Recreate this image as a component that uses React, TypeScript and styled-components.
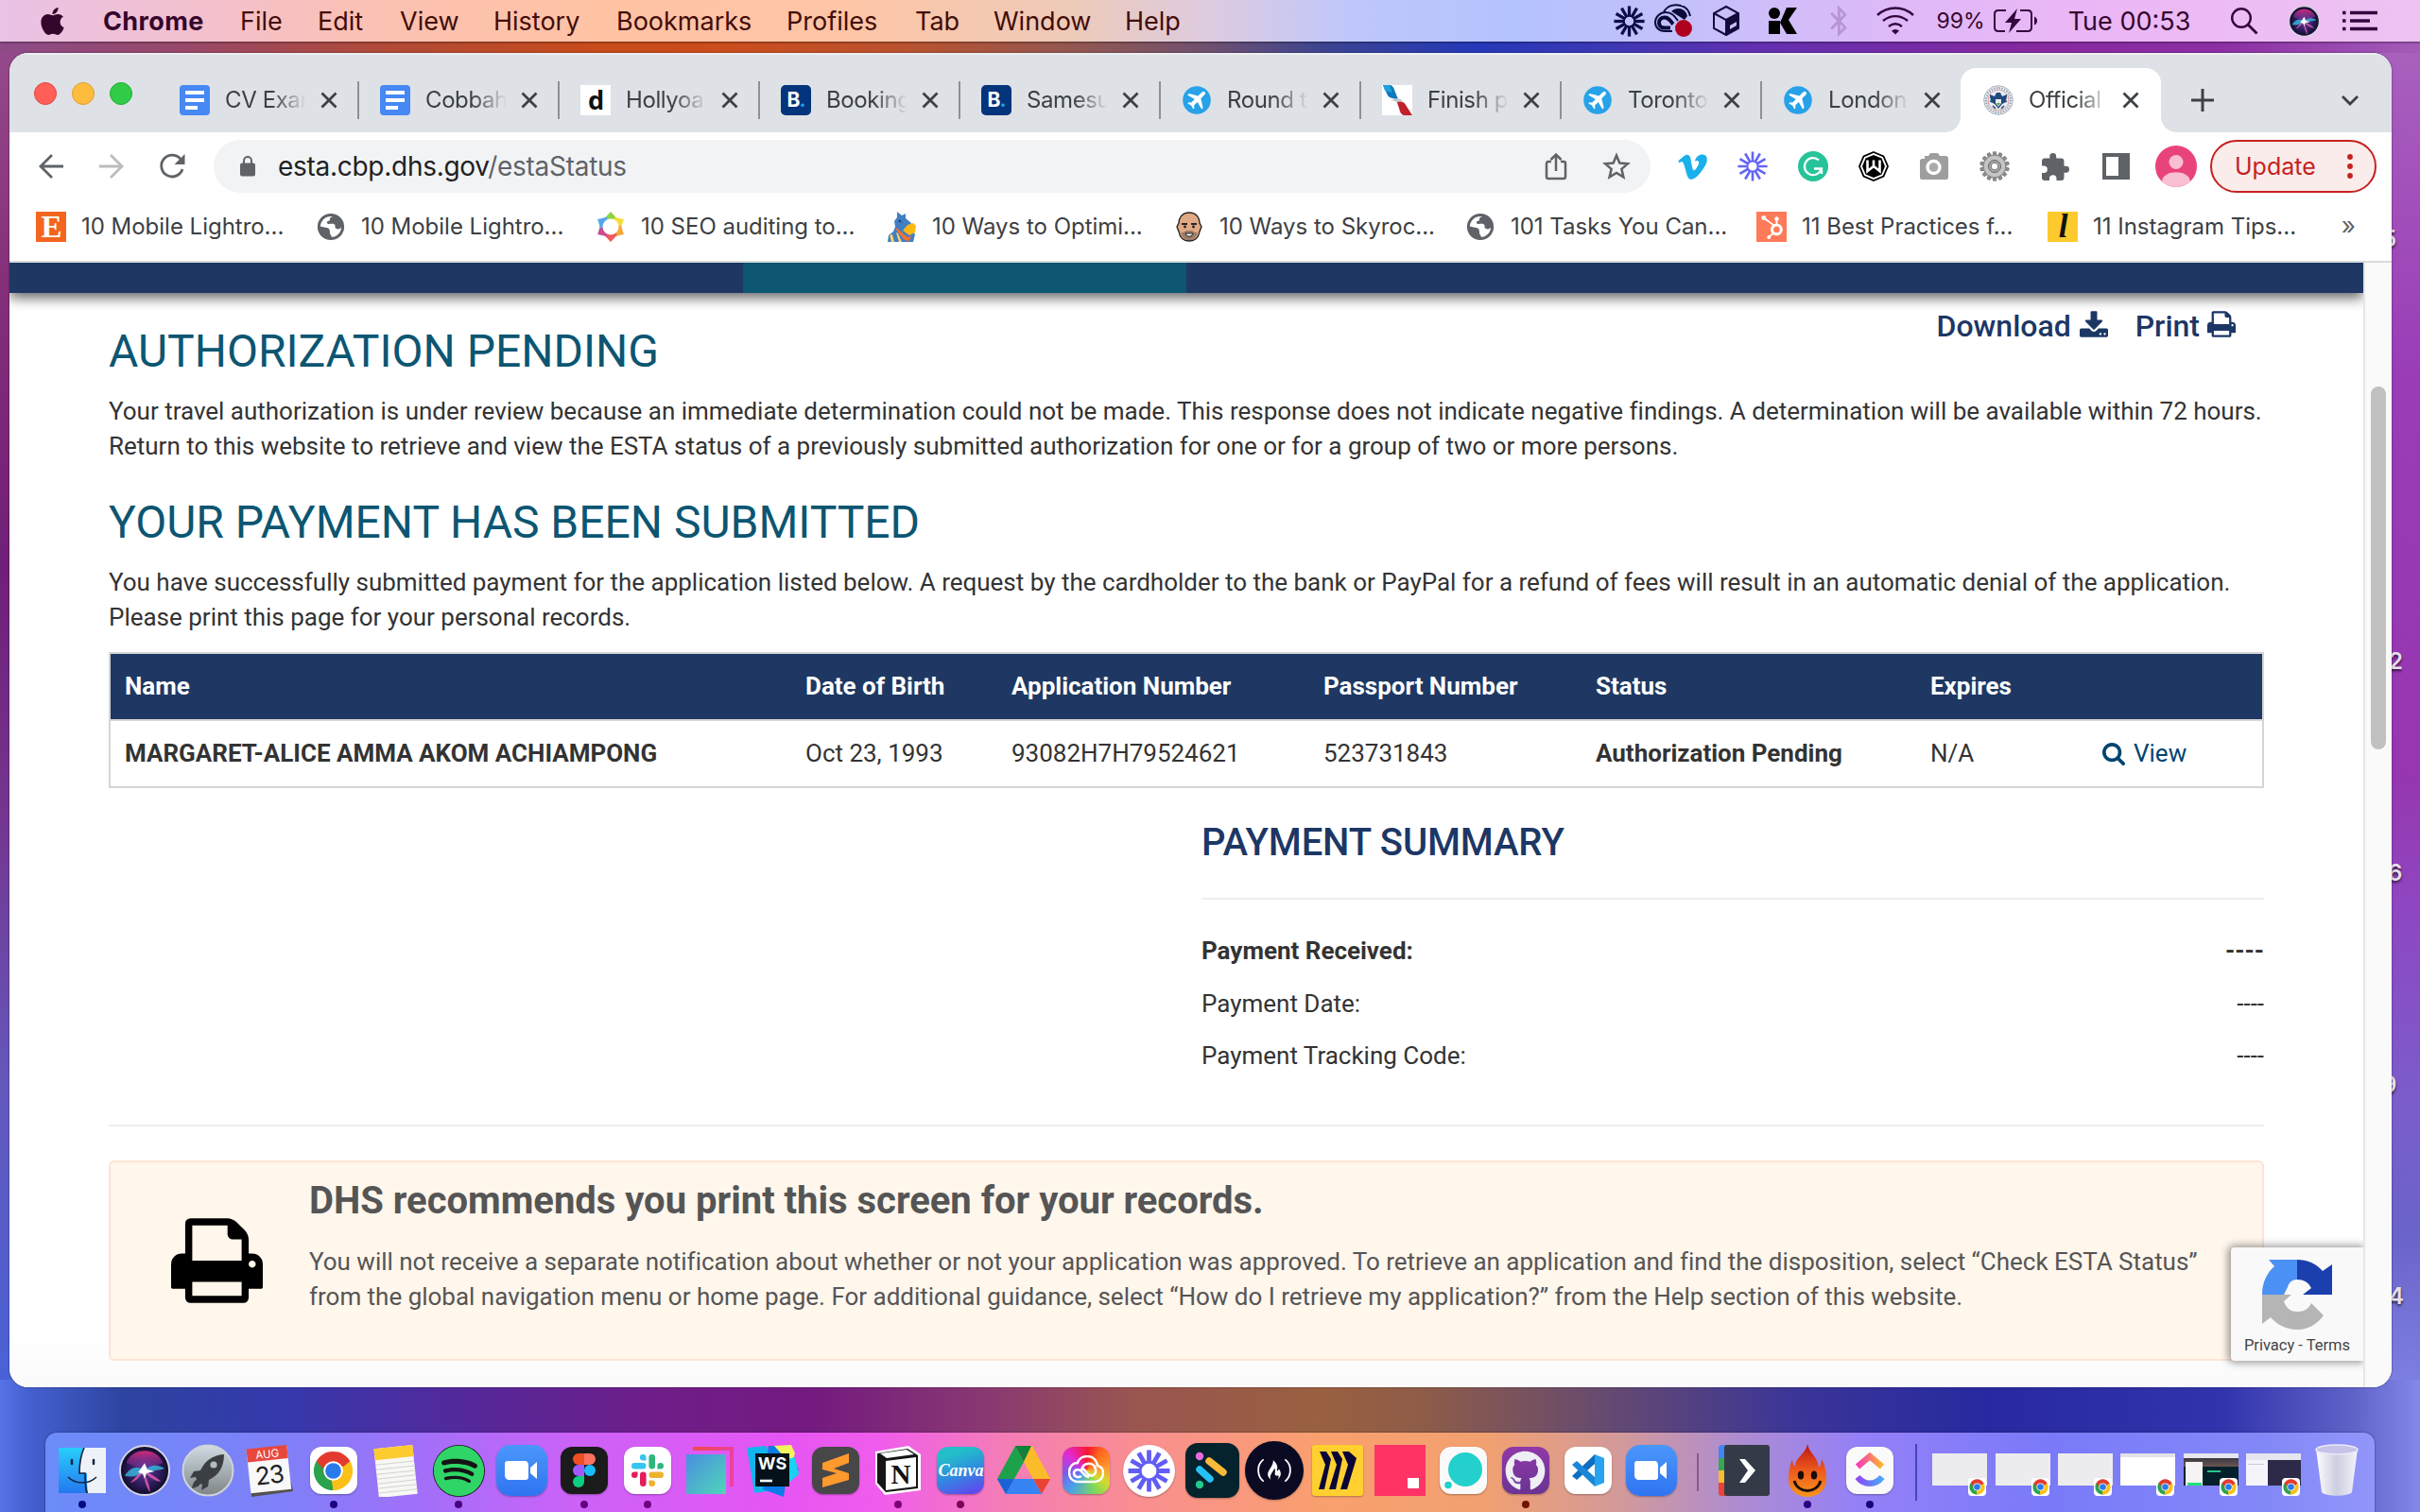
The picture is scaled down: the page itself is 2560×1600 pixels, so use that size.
import React, { ReactNode } from 'react';
import styled, { createGlobalStyle, css } from 'styled-components';
import { FaApple, FaBluetoothB, FaVimeoV, FaSpotify, FaGithub, FaHubspot, FaFreeCodeCamp } from 'react-icons/fa';

const ui = `Inter, "Noto Sans", sans-serif`;
const web = `Roboto, "Noto Sans", sans-serif`;

const GlobalStyle = createGlobalStyle`
  *, *::before, *::after { box-sizing: border-box; }
  body { margin: 0; overflow: hidden; }
  svg { display: block; flex: none; }
  h1, h2, h3, p { margin: 0; }
`;

/* ---------- desktop ---------- */

const Desktop = styled.div`
  position: relative;
  display: flex;
  flex-direction: column;
  width: 2560px;
  height: 1600px;
  overflow: hidden;
  font-family: ${ui};
  background:
    linear-gradient(90deg, #8d4b87 0, #984868 200px, #b04a38 400px, #c84b1a 640px, #cb4c1c 760px, #b9522f 960px, #8f5754 1150px, #6f5070 1280px, #3c4490 1400px, #2538b8 1560px, #3c38b4 1700px, #6030b0 1850px, #86299f 2150px, #8c2fa5 2350px, #a35bb8 2560px) 0 0 / 2560px 56px no-repeat,
    linear-gradient(90deg, #5573e6 0, #4560d0 30px, #2d44a0 130px, #3538ac 300px, #55289a 500px, #701d88 700px, #741a80 860px, #8a3a70 1050px, #9a5550 1200px, #996040 1400px, #8f5c48 1500px, #654a70 1700px, #3a3598 1900px, #2829a0 2100px, #3133ac 2350px, #6062c8 2490px, #8488e8 2560px) 0 1460px / 2560px 140px no-repeat,
    linear-gradient(180deg, #94498a 56px, #852f7a 300px, #701f78 600px, #74358f 860px, #6458bc 1150px, #4a62d6 1460px) 0 0 / 1280px 1460px no-repeat,
    linear-gradient(180deg, #a860bd 56px, #9a3cb8 400px, #9636b0 820px, #8f46c0 950px, #7a5ecb 1180px, #6a63c8 1300px, #7c7ee0 1460px) 1280px 0 / 1280px 1460px no-repeat;
`;

const IconLabel = styled.span<{ $x: number; $y: number }>`
  position: absolute;
  left: ${(p) => p.$x}px;
  top: ${(p) => p.$y}px;
  font-size: 24px;
  line-height: 30px;
  font-weight: 600;
  color: #e6dfea;
  text-shadow: 0 2px 3px rgba(0, 0, 0, 0.7);
`;

const MenuBar = styled.header`
  display: flex;
  align-items: center;
  justify-content: space-between;
  flex: none;
  height: 44px;
  padding: 0 45px 0 40px;
  font-size: 27px;
  color: #35062c;
  box-shadow: 0 1px 2px rgba(0, 0, 0, 0.45);
  background: linear-gradient(90deg, #e9c2e6 0, #f3c0cf 200px, #fbc1b2 400px, #ffc3a4 640px, #fdc5a6 900px, #eecab8 1130px, #ddcbe0 1280px, #bfc7fb 1430px, #b4c2fd 1600px, #c6c0fa 1800px, #deb9f8 2000px, #ebb6f6 2200px, #eec3f1 2560px);
`;

const MenuList = styled.nav`
  display: grid;
  grid-template-columns: 69px 145px 82px 87px 99px 130px 180px 136px 83px 139px auto;
  align-items: center;
  line-height: 45px;
`;
const MenuItem = styled.span<{ $bold?: boolean; $warm?: boolean }>`
  font-weight: ${(p) => (p.$bold ? 700 : 400)};
  letter-spacing: ${(p) => (p.$bold ? 0.4 : 0)}px;
  color: ${(p) => (p.$warm ? '#430c08' : '#35062c')};
`;
const AppleSlot = styled.div`
  margin-left: -1px;
`;
const StatusList = styled.div`
  display: flex;
  align-items: center;
  height: 44px;
`;
const StatusItem = styled.div<{ $w: number; $gap?: number; $size?: number }>`
  display: flex;
  align-items: center;
  justify-content: center;
  width: ${(p) => p.$w}px;
  margin-left: ${(p) => p.$gap ?? 0}px;
  white-space: nowrap;
  ${(p) => p.$size && css`font-size: ${p.$size}px;`}
`;

/* ---------- browser window ---------- */

const Window = styled.section`
  position: relative;
  display: flex;
  flex-direction: column;
  flex: none;
  width: 2520px;
  height: 1412px;
  margin: 12px 0 0 10px;
  border-radius: 20px;
  background: #fff;
  overflow: hidden;
  box-shadow: 0 0 2px rgba(0, 0, 0, 0.6);
`;
const TabStrip = styled.div`
  display: flex;
  align-items: center;
  flex: none;
  height: 84px;
  padding: 16px 0 0 26px;
  background: #dee1e6;
  box-shadow: inset 0 2px 0 #eceef1;
`;
const TrafficLights = styled.div`
  display: flex;
  gap: 16px;
  width: 132px;
  padding-bottom: 14px;
`;
const Light = styled.i<{ $fill: string; $ring: string }>`
  width: 24px;
  height: 24px;
  border-radius: 50%;
  background: ${(p) => p.$fill};
  border: 1px solid ${(p) => p.$ring};
`;
const TabTitle = styled.span`
  width: 85px;
  margin-left: 16px;
  overflow: hidden;
  white-space: nowrap;
  line-height: 32px;
  mask-image: linear-gradient(90deg, #000 50px, transparent 86px);
`;
const TabClose = styled.div`
  width: 18px;
  margin-left: 16px;
`;
const Tab = styled.div<{ $active?: boolean }>`
  position: relative;
  display: flex;
  align-items: center;
  width: 212px;
  height: 68px;
  padding-left: 22px;
  font-size: 24px;
  letter-spacing: -0.4px;
  color: #3c4043;
  ${(p) => p.$active && css`
    background: #fff;
    border-radius: 16px 16px 0 0;
    margin-left: -2px;
    padding-left: 24px;
    margin-right: 2px;
    ${TabClose} { margin-left: 14px; }
    &::before, &::after {
      content: '';
      position: absolute;
      bottom: 0;
      width: 16px;
      height: 16px;
    }
    &::before { left: -16px; background: radial-gradient(circle at 0 0, transparent 15.5px, #fff 16px); }
    &::after { right: -16px; background: radial-gradient(circle at 100% 0, transparent 15.5px, #fff 16px); }
  `}
`;
const TabDivider = styled.i`
  width: 2px;
  height: 40px;
  margin-left: 21px;
  background: #8d9095;
`;
const TabActions = styled.div`
  display: flex;
  flex: 1;
  align-items: center;
  justify-content: space-between;
  padding: 0 34px 0 29px;
`;
const Tile = styled.div<{ $bg: string; $fg?: string; $radius?: number; $font?: string; $size?: number }>`
  display: flex;
  align-items: center;
  justify-content: center;
  flex: none;
  width: 32px;
  height: 32px;
  border-radius: ${(p) => p.$radius ?? 0}px;
  background: ${(p) => p.$bg};
  color: ${(p) => p.$fg ?? '#fff'};
  font: 700 ${(p) => p.$size ?? 24}px/32px ${(p) => p.$font ?? ui};
  letter-spacing: -1px;
`;
const Dot = styled.span`color: #1ba4e8;`;

const Toolbar = styled.div`
  display: flex;
  align-items: center;
  flex: none;
  height: 72px;
  padding: 0 16px 0 12px;
`;
const ToolSlot = styled.div`
  display: flex;
  flex: none;
  align-items: center;
  justify-content: center;
  width: 64px;
  height: 56px;
`;
const Omnibox = styled.div`
  display: flex;
  flex: none;
  align-items: center;
  width: 1520px;
  height: 56px;
  margin: 0 12px;
  padding: 0 4px 0 28px;
  border-radius: 28px;
  background: #f1f3f4;
`;
const Url = styled.span`
  flex: 1;
  margin-left: 24px;
  font-size: 28px;
  letter-spacing: -0.28px;
  color: #202124;
`;
const UrlPath = styled.span`color: #5f6368;`;
const UpdateButton = styled.div`
  display: flex;
  flex: none;
  align-items: center;
  justify-content: space-between;
  width: 176px;
  height: 56px;
  margin-left: 4px;
  padding: 0 23px 0 24px;
  border: 2px solid #c5221f;
  border-radius: 28px;
  background: #f9eceb;
  color: #c5221f;
  font-size: 25px;
`;
const BookmarksBar = styled.div`
  display: grid;
  grid-template-columns: 296px 296px 308px 304px 308px 308px 308px auto auto;
  align-items: center;
  flex: none;
  height: 66px;
  padding: 0 38px 8px 28px;
  border-bottom: 2px solid #d8dadd;
`;
const Bookmark = styled.div`
  display: flex;
  align-items: center;
  gap: 16px;
  font-size: 24px;
  line-height: 30px;
  letter-spacing: -0.02px;
  color: #3c4043;
  white-space: nowrap;
`;
const More = styled.span`
  justify-self: end;
  margin-top: -4px;
  font-size: 26px;
  color: #5f6368;
`;

/* ---------- web page ---------- */

const Viewport = styled.div`
  position: relative;
  display: flex;
  flex: 1;
  min-height: 0;
  overflow: hidden;
`;
const Page = styled.main`
  width: 2490px;
  font-family: ${web};
  font-size: 26px;
  line-height: 37px;
  letter-spacing: -0.01px;
  color: #333;
  overflow: hidden;
  background: linear-gradient(180deg, #fff 1130px, #fafafa 1190px);
`;
const SiteNav = styled.div`
  height: 32px;
  background: linear-gradient(90deg, #1e3863 776px, #0c5672 776px, #0c5672 1245px, #1e3863 1245px);
  box-shadow: 0 5px 14px rgba(0, 0, 0, 0.62);
`;
const Content = styled.div`padding: 16px 105px 0 105px;`;
const TitleRow = styled.div`
  display: flex;
  justify-content: space-between;
  height: 91px;
`;
const Title = styled.h1`
  padding-top: 19px;
  font-size: 48px;
  font-weight: 400;
  line-height: 53px;
  color: #0c5672;
`;
const SubTitle = styled(Title).attrs({ as: 'h2' })`padding: 35px 0 19px;`;
const PageActions = styled.div`
  display: flex;
  height: 37px;
  margin-right: 30px;
  gap: 29px;
`;
const Action = styled.a<{ $gap: number }>`
  display: flex;
  gap: ${(p) => p.$gap}px;
  margin-top: 1px;
  font-size: 32px;
  font-weight: 500;
  color: #1d3765;
  svg { margin-top: 2px; }
`;

const Table = styled.div`
  width: 2280px;
  margin-top: 18px;
  border: 2px solid #d5d5d5;
`;
const Row = styled.div<{ $head?: boolean }>`
  display: grid;
  grid-template-columns: 720px 218px 330px 288px 354px 182px 1fr;
  height: ${(p) => (p.$head ? 71 : 69)}px;
  padding-top: 16px;
  ${(p) => p.$head && css`
    background: #1e3863;
    color: #fff;
    font-weight: 700;
    border-bottom: 2px solid #d5d5d5;
  `}
`;
const Cell = styled.div<{ $strong?: boolean }>`
  padding-left: 15px;
  font-weight: ${(p) => (p.$strong ? 700 : 'inherit')};
  white-space: nowrap;
`;
const ViewLink = styled.a`
  display: flex;
  align-items: center;
  gap: 9px;
  height: 37px;
  padding-left: 15px;
  color: #00446f;
`;

const Summary = styled.section`
  width: 1124px;
  margin: 36px 0 0 1156px;
`;
const SummaryTitle = styled.h2`
  padding-bottom: 36px;
  border-bottom: 2px solid #eee;
  font-size: 40px;
  font-weight: 500;
  line-height: 44px;
  letter-spacing: -0.15px;
  color: #1d3765;
`;
const SummaryList = styled.div`
  display: grid;
  gap: 18.5px;
  margin-top: 36px;
`;
const SummaryLine = styled.div<{ $strong?: boolean }>`
  display: flex;
  justify-content: space-between;
  font-weight: ${(p) => (p.$strong ? 700 : 400)};
`;
const Rule = styled.div`
  height: 2px;
  margin: 54px 0 36px;
  background: #eee;
`;
const Notice = styled.section`
  display: flex;
  width: 2280px;
  height: 212px;
  padding: 19px 0 0 64px;
  border: 2px solid #fde4d4;
  border-radius: 6px;
  background: #fff6ec;
  color: #555;
  svg { margin-top: 40px; }
`;
const NoticeBody = styled.div`margin-left: 49px;`;
const NoticeTitle = styled.h3`
  margin-bottom: 24px;
  font-size: 40px;
  line-height: 44px;
`;
const Captcha = styled.div`
  position: absolute;
  left: 2350px;
  top: 1042px;
  display: flex;
  flex-direction: column;
  align-items: center;
  width: 140px;
  height: 120px;
  padding-top: 12px;
  border-radius: 4px 0 0 4px;
  background: #f9f9f9;
  box-shadow: -1px 0 8px 2px rgba(0, 0, 0, 0.4);
  clip-path: inset(-14px 0 -14px -14px);
  font: 16.5px/20px ${web};
  color: #444;
`;
const CaptchaLinks = styled.span`margin-top: 6px;`;
const Scrollbar = styled.div`
  width: 30px;
  padding: 131px 0 0 6px;
  background: #fafafa;
  border-left: 2px solid #e6e6e6;
`;
const Thumb = styled.div`
  width: 16px;
  height: 384px;
  border-radius: 8px;
  background: #c1c1c1;
`;

/* ---------- dock ---------- */

const Dock = styled.footer`
  display: flex;
  flex: none;
  width: 2464px;
  height: 84px;
  margin: 48px 0 0 48px;
  padding: 9px 0 0 5.8px;
  border-radius: 12px 12px 0 0;
  box-shadow: 0 0 2px rgba(0, 0, 30, 0.6);
  background: linear-gradient(90deg, #6b8cf8 0, #7f80f8 250px, #a070f8 390px, #cc62f8 560px, #e655f4 780px, #f05cec 880px, #f47cb8 1010px, #f98f90 1160px, #f9a06e 1350px, #f2a070 1520px, #d49a98 1660px, #ae8cd0 1790px, #9480f8 1920px, #7a7af8 2120px, #8388f8 2350px, #9296fa 2464px);
`;
const DockGroup = styled.div`display: flex;`;
const DockItem = styled.div`
  display: flex;
  flex-direction: column;
  align-items: center;
  width: 66.4px;
`;
const DockIcon = styled.div`
  position: relative;
  display: flex;
  align-items: center;
  justify-content: center;
  height: 62px;
`;
const Running = styled.i<{ $tone: string }>`
  width: 8px;
  height: 8px;
  margin-top: 1px;
  border-radius: 50%;
  background: ${(p) => p.$tone};
`;
const DockDivider = styled.i<{ $tone: string; $h: number; $before: number; $after: number }>`
  width: 2px;
  height: ${(p) => p.$h}px;
  margin: ${(p) => (p.$h > 50 ? 3 : 13)}px ${(p) => p.$after}px 0 ${(p) => p.$before}px;
  background: ${(p) => p.$tone};
`;
const AppTile = styled.div<{ $bg: string; $w?: number; $h?: number; $r?: number }>`
  display: flex;
  align-items: center;
  justify-content: center;
  width: ${(p) => p.$w ?? 50}px;
  height: ${(p) => p.$h ?? 50}px;
  border-radius: ${(p) => p.$r ?? 12}px;
  background: ${(p) => p.$bg};
  box-shadow: 0 1px 2px rgba(0, 0, 0, 0.3);
  overflow: hidden;
`;
const SpotifyDisc = styled(FaSpotify)`
  border-radius: 50%;
  background: #141414;
`;
const CanvaWord = styled.span`
  font: italic 700 18px "Liberation Serif", serif;
  color: #fff;
`;
const Thumbnail = styled.div<{ $bg: string }>`
  width: 58px;
  height: 34px;
  margin-top: -2px;
  background: ${(p) => p.$bg};
`;
const ThumbBadge = styled.div`
  position: absolute;
  right: 1px;
  bottom: 4px;
  width: 19px;
  height: 19px;
  padding: 1px;
  border-radius: 4px;
  background: #fff;
`;

/* ---------- drawings ---------- */

const Svg = ({ w, h, vb, children }: { w: number; h?: number; vb: string; children: ReactNode }) => (
  <svg width={w} height={h ?? w} viewBox={vb} fill="none">{children}</svg>
);

const Sunburst = ({ size, color, width = 2.6, inner = 5 }: { size: number; color: string; width?: number; inner?: number }) => (
  <Svg w={size} vb="-16 -16 32 32">
    {Array.from({ length: 12 }, (_, i) => (
      <path key={i} d={`M0 ${-inner}V-15.6`} stroke={color} strokeWidth={width} transform={`rotate(${i * 30})`} />
    ))}
    <circle r={inner + 0.6} stroke={color} strokeWidth="2" />
  </Svg>
);

const Printer = ({ w, h, color }: { w: number; h: number; color: string }) => (
  <Svg w={w} h={h} vb="0 128 1664 1536">
    <path fill={color} d="M384 1536h896v-256h-896v256zm0-640h896v-384h-160q-40 0-68-28t-28-68v-160h-640v640zm1152 64q0-26-19-45t-45-19-45 19-19 45 19 45 45 19 45-19 19-45zm128 0v416q0 13-9.5 22.5t-22.5 9.5h-224v160q0 40-28 68t-68 28h-960q-40 0-68-28t-28-68v-160h-224q-13 0-22.5-9.5t-9.5-22.5v-416q0-79 56.5-135.5t135.5-56.5h64v-544q0-40 28-68t68-28h672q40 0 88 20t76 48l152 152q28 28 48 76t20 88v256h64q79 0 135.5 56.5t56.5 135.5z" />
  </Svg>
);
const DownloadGlyph = () => (
  <Svg w={30} h={28} vb="64 0 1664 1536">
    <path fill="#1d3765" d="M1344 1344q0-26-19-45t-45-19-45 19-19 45 19 45 45 19 45-19 19-45zm256 0q0-26-19-45t-45-19-45 19-19 45 19 45 45 19 45-19 19-45zm128-224v320q0 40-28 68t-68 28h-1472q-40 0-68-28t-28-68v-320q0-40 28-68t68-28h465l135 136q58 56 136 56t136-56l136-136h464q40 0 68 28t28 68zm-325-569q17 41-14 70l-448 448q-18 19-45 19t-45-19l-448-448q-31-29-14-70 17-39 59-39h256v-448q0-26 19-45t45-19h256q26 0 45 19t19 45v448h256q42 0 59 39z" />
  </Svg>
);
const SearchGlyph = () => (
  <Svg w={24} vb="64 128 1664 1664">
    <path fill="#00446f" d="M1216 832q0-185-131.5-316.5t-316.5-131.5-316.5 131.5-131.5 316.5 131.5 316.5 316.5 131.5 316.5-131.5 131.5-316.5zm512 832q0 52-38 90t-90 38q-54 0-90-38l-343-342q-179 124-399 124-143 0-273.5-55.5t-225-150-150-225-55.5-273.5 55.5-273.5 150-225 225-150 273.5-55.5 273.5 55.5 225 150 150 225 55.5 273.5q0 220-124 399l343 343q37 37 37 90z" />
  </Svg>
);

const CloseX = () => (
  <Svg w={18} vb="0 0 18 18"><path d="M1.5 1.5l15 15M16.5 1.5l-15 15" stroke="#3c4043" strokeWidth="2.8" /></Svg>
);
const DocsIcon = () => (
  <Svg w={32} vb="0 0 32 32">
    <rect width="32" height="32" rx="4" fill="#4688f4" />
    <path d="M6 8h20M6 16h20M6 24h13" stroke="#fff" strokeWidth="4" />
  </Svg>
);
const PlaneIcon = () => (
  <Svg w={32} vb="0 0 32 32">
    <circle cx="16" cy="16" r="14.8" fill="#27a2e8" />
    <path d="M24.6 7.4c-1.2-1.1-2.6-.5-3.6.5l-3.6 3.5-9.6-2.3-1.6 1.5 7.6 4.4-3.5 3.6-2.8-.4-1.2 1.2 3.8 2.2 2.2 3.8 1.2-1.2-.4-2.8 3.6-3.5 4.4 7.6 1.5-1.6-2.3-9.6 3.5-3.6c1-1 1.700-2.300.8-3.300z" fill="#fff" />
  </Svg>
);
const AirlineIcon = () => (
  <Svg w={32} vb="0 0 32 32">
    <path fill="#fff" d="M0 0h32v32H0z" />
    <path d="M1 0h8c2.500 1 3.500 3 4 5l4 10c-6-1-9-1-11-4z" fill="#0f79bd" />
    <path d="M1 0h7l3 8-8-2z" fill="#1aa3dd" />
    <path d="M10 16c3-2 9-3 12 1l-6 4c1-3-2-4-6-5z" fill="#c3c9ce" />
    <path d="M16 18c5-1 8 0 9 3l7 11h-8c-3 0-4-2-5-4z" fill="#c1202c" />
  </Svg>
);
const SealIcon = () => (
  <Svg w={32} vb="-16 -16 32 32">
    <circle r="15.300" fill="#eceff2" stroke="#a9b0b8" />
    <circle r="13" stroke="#8599b0" strokeWidth="2" strokeDasharray="1.300 1.500" />
    <circle r="11" fill="#e6ecf2" stroke="#dc9a9a" />
    <path d="M-9-6l5 2 2-4h4l2 4 5-2c0 6-2 9-5 10l-4 5-4-5c-3-1-5-4-5-10z" fill="#1f4a7d" />
    <path d="M-6 6l3 3M6 6L3 9M-9 1l3 1M9 1L6 2" stroke="#1f4a7d" strokeWidth="1.500" />
    <path d="M-3-1h6v4l-3 4-3-4z" fill="#e8ece8" /><path d="M-2 3h4l-2 3z" fill="#5e9b50" />
  </Svg>
);
const GlobeIcon = () => (
  <Svg w={32} vb="-16 -16 32 32">
    <circle r="12.600" stroke="#5f6368" strokeWidth="3" />
    <path d="M-12 0C-9-1-7 1-4 1-1 2-1 4-1 6c0 3 2 2 2 6-7 2-13-4-13-12zM4-12c-2 2-5 1-5 4 0 3-4 1-3 4 1 2 5 0 7 1 3 1 0 4 3 5 2 1 4 0 6-2 1-6-3-11-8-12z" fill="#5f6368" />
  </Svg>
);
const FlowerIcon = () => (
  <Svg w={32} vb="-16 -16 32 32">
    {['#8bd346', '#f4dd3b', '#f9a63a', '#ef5a5a', '#c94f8f', '#55a7e8'].map((c, i) => (
      <path key={c} d="M-7-8.500L0-16l7 7.500L4-6-4-6z" fill={c} transform={`rotate(${i * 60})`} />
    ))}
    <circle r="8.500" fill="#fff" />
  </Svg>
);
const MascotIcon = () => (
  <Svg w={32} vb="0 0 32 32">
    <path d="M11 0l5 4 4-2v5l6 5-1 6 5 6-2 8H1l1-7 5-4 2-5-1-6 3-4z" fill="#417fc4" />
    <path d="M22 14l6-2 3 3-1 7-6 3-7-5z" fill="#fdb813" /><path d="M9 16l7 6 6 5 4-1-2 5-5-1-8-9z" fill="#f4702e" />
    <path d="M3 25l2 7h3l-2-8zM10 22l3 10h3l-4-9z" fill="#ffd36b" />
    <path d="M13 9l2 2" stroke="#1e3f6b" strokeWidth="2" />
  </Svg>
);
const FaceIcon = () => (
  <Svg w={32} vb="0 0 32 32">
    <path d="M16 1c8 0 11 6 11 11l2 4-2 5c-1 6-5 10-11 10S6 27 5 21l-2-5 2-4C5 7 8 1 16 1z" fill="#e0a984" stroke="#2b2321" strokeWidth="1.400" />
    <path d="M7 22c2 6 5 8 9 8s7-2 9-8c-2 1-4-1-6-2h-6c-2 1-4 3-6 2z" fill="#9a7b66" />
    <path d="M8 13h6M18 13h6" stroke="#2b2321" strokeWidth="2" /><circle cx="11.500" cy="16" r="1.400" fill="#222" /><circle cx="20.500" cy="16" r="1.400" fill="#222" />
    <path d="M12 23h8l-2 3h-4z" fill="#fff" stroke="#222" />
  </Svg>
);

const ChromeLogo = ({ size }: { size: number }) => (
  <Svg w={size} vb="-24 -24 48 48">
    <path d="M0 0L-19.900-11.500A23 23 0 0 1 19.900-11.500z" fill="#e33b2e" />
    <path d="M0 0L19.900-11.500A23 23 0 0 1 0 23z" fill="#fbc116" />
    <path d="M0 0V23A23 23 0 0 1-19.900-11.500z" fill="#2ba24c" />
    <path d="M0-11.500H19.900L12-5zM-10 5.700L-19.900-11.500-5-9z" fill="#e33b2e" />
    <path d="M-10 5.700L-19.900-11.500-11-2z" fill="#2ba24c" /><path d="M10 5.700L0 23-2 11z" fill="#fbc116" />
    <circle r="11.500" fill="#fff" /><circle r="9.300" fill="#2a7bea" />
  </Svg>
);

const SiriOrb = ({ size }: { size: number }) => (
  <Svg w={size} vb="-28 -28 56 56">
    <defs>
      <radialGradient id="orb"><stop offset="0" stopColor="#5a3c9c" /><stop offset=".65" stopColor="#2c1a58" /><stop offset="1" stopColor="#0d0d26" /></radialGradient>
      <linearGradient id="orbPink" x1="0" y1="0" x2="0" y2="1"><stop stopColor="#e22b7d" stopOpacity=".9" /><stop offset="1" stopColor="#7d3fb8" stopOpacity=".2" /></linearGradient>
    </defs>
    <circle r="27" fill="url(#orb)" stroke="#d9d6e6" strokeWidth="2" />
    <path d="M-20-8C-14-26 14-26 20-8 10-4 4-2 0 0-8-4-14-6-20-8z" fill="url(#orbPink)" />
    <path d="M-22 6C-14-6-6-4 0 0 8-8 16-6 22-2 16 0 8 0 0 2-8 6-14 8-22 6z" fill="#35c6e8" fillOpacity=".75" />
    <path d="M0 0c6 4 14 8 18 12C10 12 4 6 0 2c2 8 6 14 6 22C0 16 0 8-2 2c-4 6-8 10-14 12C-10 8-6 2 0 0z" fill="#ea5fae" fillOpacity=".8" />
    <path d="M-7 2L0-8l3 7 8 2-9 2-2 6-2-5z" fill="#fff" />
  </Svg>
);

const CubeIcon = () => (
  <Svg w={30} h={34} vb="0 0 30 34">
    <path d="M15 2l13 7v16l-13 7-13-7V9z" stroke="#140a3c" strokeWidth="2" />
    <path d="M2 9l13 7v16M15 16L28 9" stroke="#140a3c" strokeWidth="2" />
    <path d="M15 16l13-7v16l-13 7z" fill="#140a3c" /><path d="M19 22l7-4v4l-7 4z" fill="#cbbffa" />
  </Svg>
);
const CloudRecordIcon = () => (
  <Svg w={42} h={36} vb="0 0 42 36">
    <path d="M11 8.500C15 1.500 23 0 29 2c6 1.500 9 6 10 11" stroke="#0b0b3a" strokeWidth="2" />
    <path d="M19 8c5-5 15-4 17 5l-3 4z" fill="#0b0b3a" />
    <path d="M20 29h-8C6 29 2 25 2 19.500S7 9 13 9c7 0 10 5 13 9" stroke="#0b0b3a" strokeWidth="2" />
    <path d="M18 25.500h-6c-8 0-8-11 0-11 5 0 6 4 9 7" stroke="#0b0b3a" strokeWidth="4" />
    <circle cx="32" cy="26" r="9" fill="#b00020" />
  </Svg>
);
const KIcon = () => (
  <Svg w={30} h={28} vb="0 0 30 28">
    <circle cx="6" cy="6" r="6" fill="#000" /><path d="M0 14h12v14H0zM19 0h11l-9 13 9 15H19l-7-12z" fill="#000" />
  </Svg>
);
const WifiIcon = () => (
  <Svg w={42} h={30} vb="0 0 42 30">
    <path d="M2 9C13-1 29-1 40 9M8 15c8-6.500 18-6.500 26 0M14 21c4.500-3.500 9.500-3.500 14 0" stroke="#33063f" strokeWidth="2.400" />
    <path d="M17 25.500c2.500-2 5.500-2 8 0L21 29.500z" fill="#33063f" />
  </Svg>
);
const BatteryIcon = () => (
  <Svg w={48} h={26} vb="0 0 48 26">
    <path d="M14 2H6C3 2 2 3 2 6v14c0 3 1 4 4 4h7M29 2h8c3 0 4 1 4 4v14c0 3-1 4-4 4H25" stroke="#33063f" strokeWidth="2" />
    <path d="M26 0L13 15h7l-3 11 13-15h-7z" fill="#33063f" /><path d="M44 8.500c4 1 4 8 0 9z" fill="#33063f" />
  </Svg>
);
const MagnifierIcon = () => (
  <Svg w={30} vb="0 0 30 30"><circle cx="12" cy="12" r="9.800" stroke="#33063f" strokeWidth="2.400" /><path d="M19 19l9.500 9.500" stroke="#33063f" strokeWidth="2.800" /></Svg>
);
const ListIcon = () => (
  <Svg w={37} h={22} vb="0 0 37 22"><path d="M8 2.500h29M8 11h21M8 19.500h29" stroke="#33063f" strokeWidth="3.400" /><path d="M0 2.500h3.500M0 11h3.500M0 19.500h3.500" stroke="#33063f" strokeWidth="3.400" /></Svg>
);

const ArrowIcon = ({ color, flip }: { color: string; flip?: boolean }) => (
  <Svg w={28} vb="0 0 28 28"><path transform={flip ? 'matrix(-1 0 0 1 28 0)' : undefined} d="M27 14H3M15 2L3 14l12 12" stroke={color} strokeWidth="2.800" /></Svg>
);
const ReloadIcon = () => (
  <Svg w={28} vb="0 0 28 28"><path d="M23.500 7A11.400 11.400 0 1 0 25 17" stroke="#5f6368" strokeWidth="2.800" /><path d="M27.500 1v11h-11z" fill="#5f6368" /></Svg>
);
const LockIcon = () => (
  <Svg w={16} h={22} vb="0 0 16 22"><path d="M4 9V5a4 4 0 0 1 8 0v4" stroke="#5f6368" strokeWidth="2" /><rect y="7.500" width="16" height="14" rx="2" fill="#5f6368" /></Svg>
);
const ShareIcon = () => (
  <Svg w={24} h={30} vb="0 0 24 30"><path d="M7 10H4c-1.300 0-2 .7-2 2v14c0 1.300.7 2 2 2h16c1.300 0 2-.7 2-2V12c0-1.300-.7-2-2-2h-3M12 20V3M6.500 8L12 2.500 17.500 8" stroke="#5f6368" strokeWidth="2.500" /></Svg>
);
const StarIcon = () => (
  <Svg w={30} vb="0 0 30 30"><path d="M15 3.500l3.300 8 8.700.7-6.600 5.700 2 8.500L15 22l-7.400 4.400 2-8.500L3 12.200l8.700-.7z" stroke="#5f6368" strokeWidth="2.500" /></Svg>
);
const GrammarlyIcon = () => (
  <Svg w={32} vb="0 0 32 32"><circle cx="16" cy="16" r="16" fill="#27c399" /><path d="M22 9.500A9 9 0 1 0 24.500 19M17 18.500h8v5.500" stroke="#fff" strokeWidth="2.300" /></Svg>
);
const WBadge = () => (
  <Svg w={32} vb="0 0 32 32">
    <path d="M16 1l10.500 4.500L31 16l-4.500 10.500L16 31 5.500 26.500 1 16 5.500 5.500z" fill="#fff" stroke="#000" strokeWidth="1.800" />
    <path d="M16 4l8.500 3.500L28 16l-3.500 8.500L16 28l-8.500-3.500L4 16l3.500-8.500z" fill="#000" />
    <path d="M9.500 9.500v11.500l6.500-5 6.500 5V9.500M16 16V9.500" stroke="#fff" strokeWidth="2.600" />
  </Svg>
);
const CameraIcon = () => (
  <Svg w={30} h={28} vb="0 0 30 28"><path d="M2 6h3V3h4l2-3h8l2 3h6c2 0 3 1 3 3v20c0 1-1 2-2 2H2c-1 0-2-1-2-2V8c0-1 1-2 2-2z" fill="#9e9e9e" /><circle cx="14.500" cy="15" r="6.500" fill="#aaa" stroke="#fff" strokeWidth="3.400" /></Svg>
);
const GearIcon = () => (
  <Svg w={32} vb="-16 -16 32 32">
    {Array.from({ length: 14 }, (_, i) => <path key={i} d="M-2.200-10l.7-5.300h3l.7 5.300z" fill="#8c8c8c" stroke="#666" strokeWidth=".6" transform={`rotate(${i * 25.710})`} />)}
    <circle r="11.800" fill="#c4c4c4" stroke="#7c7c7c" strokeWidth=".8" /><circle r="6.500" fill="#a5a5a5" stroke="#666" /><circle r="3.800" fill="#fff" stroke="#777" />
  </Svg>
);
const PuzzleIcon = () => (
  <Svg w={29} vb="2 1 21 21"><path fill="#5f6368" d="M20.5 11H19V7c0-1.100-.9-2-2-2h-4V3.500a2.500 2.500 0 0 0-5 0V5H4c-1.100 0-1.990.9-1.990 2v3.800H3.500a2.700 2.700 0 0 1 0 5.400H2V20c0 1.100.9 2 2 2h3.800v-1.500a2.700 2.700 0 0 1 5.400 0V22H17c1.100 0 2-.9 2-2v-4h1.500a2.500 2.500 0 0 0 0-5z" /></Svg>
);
const PanelIcon = () => (
  <Svg w={29} h={28} vb="0 0 29 28"><path d="M0 0h29v28H0zM4 4v20h13V4z" fill="#5f6368" fillRule="evenodd" /></Svg>
);
const AvatarIcon = () => (
  <Svg w={44} vb="0 0 44 44">
    <defs><clipPath id="av"><circle cx="22" cy="22" r="22" /></clipPath></defs>
    <g clipPath="url(#av)"><path fill="#e9437c" d="M0 0h44v44H0z" /><circle cx="22" cy="17.500" r="7.500" fill="#f8bfd2" /><path d="M7 38c1-13 29-13 30 0l-4 6H11z" fill="#f8bfd2" /></g>
  </Svg>
);

const CaptchaLogo = () => (
  <Svg w={76} h={76} vb="0 0 76 76">
    <path d="M38 1v21c-6 0-9 4-10 8l-4 8H1C1 25 6 15 14 8L8 1z" fill="#4a90f5" />
    <path d="M38 1c11 0 20 4 27 12l10-7v32H44l9-7c-3-6-8-9-15-9z" fill="#1c3fae" />
    <path d="M1 38h31l-8 7c2 6 6 11 14 11 8 0 12-3 15-9l13 13c-7 9-16 15-28 15-11 0-21-5-28-13L1 69z" fill="#b5b5b5" />
  </Svg>
);

/* ---------- dock drawings ---------- */

const Finder = () => (
  <Svg w={50} h={48} vb="0 0 50 48">
    <defs><linearGradient id="fb" x1="0" y1="0" x2="0" y2="1"><stop stopColor="#28cdfb" /><stop offset="1" stopColor="#2478f0" /></linearGradient></defs>
    <path d="M0 0h50v48H0z" fill="#eef2f8" /><path d="M0 0h27c-4 9-5 18-5 27h8c0 8 0 15 1 21H0z" fill="url(#fb)" />
    <path d="M14 13v4M37 13v4" stroke="#15233d" strokeWidth="2.500" strokeLinecap="round" />
    <path d="M10 31c8 8 22 8 30 0M27 0c-4 9-5 18-5 27h6c0 8 0 15 2 21" stroke="#15233d" strokeWidth="1.600" />
  </Svg>
);
const Rocket = () => (
  <Svg w={56} vb="-28 -28 56 56">
    <defs><linearGradient id="rk" x1="0" y1="0" x2="0" y2="1"><stop stopColor="#cfdce2" /><stop offset="1" stopColor="#7f8486" /></linearGradient></defs>
    <circle r="26.500" fill="url(#rk)" stroke="#cfd4d8" strokeWidth="2" />
    <path d="M17-17C4-16-3-10-8 0l-7 1-4 7 6-1c1 4 3 6 7 8l-1 6 7-4 1-7C11 5 17-3 17-17z" fill="#3b3f44" />
    <circle cx="6" cy="-6" r="3.600" fill="#b3bcc1" /><path d="M-10 9c-4 1-6 4-7 10 5-1 9-3 10-7z" fill="#3b3f44" />
  </Svg>
);
const CalendarIcon = () => (
  <Svg w={56} vb="0 0 56 56">
    <path d="M6 12l2 44 44-6-2-9z" fill="#55524e" />
    <g transform="rotate(-6 28 28)">
      <path d="M5 4h43v46H5z" fill="#f8f8f8" /><path d="M5 3h43v14H5z" fill="#e8473f" />
      <text x="26.500" y="14.500" fontFamily="Inter, sans-serif" fontSize="11.500" fill="#fff" textAnchor="middle">AUG</text>
      <text x="26.500" y="42" fontFamily="Inter, sans-serif" fontSize="26" fill="#222" textAnchor="middle" letterSpacing="-1">23</text>
    </g>
  </Svg>
);
const Notes = () => (
  <Svg w={56} vb="0 0 56 56">
    <g transform="rotate(-6 28 28)"><path d="M7 3h41v52H7z" fill="#f7f7f4" /><path d="M7 3h41v12H7z" fill="#fccb2f" />
      <path d="M7 20h41M7 25h41M7 30h41M7 35h41M7 40h41M7 45h41M7 50h41" stroke="#d2d2d2" /></g>
  </Svg>
);
const ZoomCam = () => (
  <AppTile $bg="linear-gradient(#4a97fb, #2f74f0)" $w={54} $h={54} $r={15}>
    <Svg w={36} h={20} vb="0 0 36 20"><path d="M0 3c0-2 1-3 3-3h18c3 0 4 2 4 5v12c0 2-1 3-3 3H5c-3 0-5-2-5-5zM27 7l7-6v18l-7-6z" fill="#fff" /></Svg>
  </AppTile>
);
const FigmaMark = () => (
  <Svg w={24} h={36} vb="0 0 24 36">
    <path d="M6 0h6v12H6A6 6 0 0 1 6 0z" fill="#f04e23" /><path d="M12 0h6a6 6 0 0 1 0 12h-6z" fill="#ff7262" />
    <path d="M6 12h6v12H6a6 6 0 0 1 0-12z" fill="#a259ff" /><circle cx="18" cy="18" r="6" fill="#1abcfe" /><path d="M6 24h6v6a6 6 0 1 1-6-6z" fill="#0acf83" />
  </Svg>
);
const SlackMark = () => (
  <Svg w={36} vb="-18 -18 36 36">
    {['#36c5f0', '#2eb67d', '#ecb22e', '#e01e5a'].map((c, i) => (
      <g key={c} transform={`rotate(${i * 90})`} fill={c}>
        <rect x="-17" y="-8" width="15.500" height="6.600" rx="3.300" /><path d="M-4.800-17a3.300 3.300 0 0 1 3.300 3.300v3.300h-3.300a3.300 3.300 0 0 1 0-6.600z" />
      </g>
    ))}
  </Svg>
);
const Squares = () => (
  <Svg w={50} vb="0 0 50 50">
    <defs>
      <linearGradient id="sqa"><stop stopColor="#ef4a4a" /><stop offset="1" stopColor="#ee3fa0" /></linearGradient>
      <linearGradient id="sqb" x1="0" y1="0" x2="1" y2="1"><stop stopColor="#4a8ee0" /><stop offset="1" stopColor="#4fd6b8" /></linearGradient>
    </defs>
    <path d="M7 0h43v42h-4V4H7z" fill="url(#sqa)" /><path d="M0 8h42v42H0z" fill="url(#sqb)" />
  </Svg>
);
const WebStorm = () => (
  <Svg w={56} vb="0 0 56 56">
    <path d="M1 4l20-2 4 8-2 40-14 2z" fill="#11b5ee" /><path d="M24 2h22l10 26-14 14-2 14-22-8z" fill="#0b7be8" />
    <path d="M30 2l18-1 4 9-4 12z" fill="#f2f45c" /><path d="M36 18l16-4 4 18-12 10z" fill="#19d2f2" />
    <path d="M10 10h36v35H10z" fill="#04101a" />
    <text x="28" y="27" fontFamily="Inter, sans-serif" fontWeight="700" fontSize="18" fill="#fff" textAnchor="middle">WS</text><path d="M15 39h13" stroke="#fff" strokeWidth="2.600" />
  </Svg>
);
const SublimeMark = () => (
  <Svg w={28} h={36} vb="0 0 28 36"><path d="M0 10L28 0v10l-16 6 16 5v7L0 36V26l15-5L0 17z" fill="#ff9a2e" /></Svg>
);
const NotionIcon = () => (
  <Svg w={50} h={52} vb="0 0 50 52">
    <path d="M1 6L36 0l13 9v38l-38 5L1 40z" fill="#fff" /><path d="M3 8l32-5 11 7v35l-34 4-9-10z" fill="#151515" />
    <path d="M12 16l32-4v31l-32 4zM6 8l28-4 8 5-29 4z" fill="#fff" />
    <text x="28" y="40" fontFamily="Liberation Serif, serif" fontWeight="700" fontSize="29" fill="#111" textAnchor="middle">N</text>
  </Svg>
);
const DriveIcon = () => (
  <Svg w={56} h={52} vb="0 0 56 52">
    <path d="M19 0L0 35l9 16 19-34z" fill="#1ea14b" /><path d="M19 0h18l-9 17z" fill="#12813a" /><path d="M37 0H36L28 17l10 18h18z" fill="#fbbc2a" />
    <path d="M0 35h18L9 51z" fill="#1a62d8" /><path d="M18 35h20l9 16H9z" fill="#3684f4" /><path d="M38 35h18l-9 16z" fill="#ea4335" />
  </Svg>
);
const CreativeCloudMark = () => (
  <Svg w={38} h={32} vb="0 0 38 32">
    <path d="M12 28h16c5 0 9-4 9-9 0-4-2-7-6-8C30 4 25 1 20 1c-5 0-9 3-10 7C5 8 1 12 1 18s4 10 9 10z" stroke="#fff" strokeWidth="2.400" />
    <path d="M22 23c-4 0-5-3-8-6-3-3-8-2-8 2s5 5 8 3M14 16c2-10 14-9 15-1 1 6-5 9-9 4l-4-5" stroke="#fff" strokeWidth="2.600" />
  </Svg>
);
const ScreenMark = () => (
  <Svg w={36} h={40} vb="0 0 36 40">
    <circle cx="5" cy="5" r="4.200" fill="#e66be0" /><circle cx="5" cy="35" r="4.200" fill="#23c98a" />
    <path d="M15 10l15 12" stroke="#fbb93a" strokeWidth="7.500" strokeLinecap="round" /><path d="M5 19l11 10" stroke="#25c2f6" strokeWidth="7.500" strokeLinecap="round" />
  </Svg>
);
const MiroMark = () => (
  <Svg w={40} vb="0 0 40 40">
    <path d="M1 0h7l5 8-7 32H0l7-26zM13 0h7l5 8-7 32h-7l8-26zM25 0h7l8 7-10 33h-7l8-26z" fill="#0a0636" />
  </Svg>
);
const TealBlob = () => (
  <Svg w={42} h={40} vb="0 0 42 40"><ellipse cx="23" cy="19" rx="18" ry="18" fill="#23d0cc" /><circle cx="5" cy="35.500" r="3.800" fill="#23d0cc" /></Svg>
);
const VsCodeMark = () => (
  <Svg w={36} vb="0 0 36 36">
    <path d="M25 1l10 4v26l-10 4z" fill="#27a3ef" /><path d="M25 1v10L6 28l-5-4z" fill="#0e6fbf" /><path d="M25 35V25L6 8l-5 4z" fill="#1b86d6" />
  </Svg>
);
const TerminalIcon = () => (
  <Svg w={54} vb="0 0 54 54">
    <rect width="20" height="54" rx="4" fill="#4285f4" /><path d="M0 14h10v13H0z" fill="#34a853" /><path d="M0 27h10v13H0z" fill="#fbbc2e" /><path d="M0 40h10v14H4c-3 0-4-1-4-4z" fill="#ea4335" />
    <rect x="6" width="48" height="54" rx="3" fill="#343a48" /><path d="M22 15h6l11 12-11 13h-6l9-13z" fill="#fff" />
  </Svg>
);
const FlameIcon = () => (
  <Svg w={42} h={56} vb="0 0 42 56">
    <defs><linearGradient id="fl" x1="0" y1="0" x2="0" y2="1"><stop stopColor="#b81414" /><stop offset=".5" stopColor="#ee5a1c" /><stop offset="1" stopColor="#f7941e" /></linearGradient></defs>
    <path d="M21 0c2 10 11 13 12 25 2-2 3-5 3-9 5 8 5 18 5 22 0 10-8 18-20 18S1 48 1 38c0-7 1-15 4-22 0 4 1 6 3 8C8 14 19 11 21 0z" fill="url(#fl)" />
    <ellipse cx="14" cy="33" rx="3.200" ry="4.500" fill="#1a0d08" /><ellipse cx="28" cy="33" rx="3.200" ry="4.500" fill="#1a0d08" /><path d="M7 39c4 14 24 14 28 0" stroke="#1a0d08" strokeWidth="2.800" />
  </Svg>
);
const ClickUpMark = () => (
  <Svg w={32} h={38} vb="0 0 32 38">
    <defs>
      <linearGradient id="cua"><stop stopColor="#f53ab8" /><stop offset="1" stopColor="#ffb52e" /></linearGradient>
      <linearGradient id="cub"><stop stopColor="#8b4af6" /><stop offset="1" stopColor="#4aa8fa" /></linearGradient>
    </defs>
    <path d="M3 15L16 4l13 11" stroke="url(#cua)" strokeWidth="6.500" /><path d="M3 26c7 9 19 9 26 0" stroke="url(#cub)" strokeWidth="6.500" />
  </Svg>
);
const TrashIcon = () => (
  <Svg w={46} h={56} vb="0 0 46 56">
    <defs><linearGradient id="tr"><stop stopColor="#fdfdff" /><stop offset=".5" stopColor="#cccddf" /><stop offset="1" stopColor="#f4f4fb" /></linearGradient></defs>
    <path d="M1 5h44l-6 46c-4 5-28 5-32 0z" fill="url(#tr)" /><ellipse cx="23" cy="6" rx="22" ry="5" fill="#c5c3ea" stroke="#ecebf6" strokeWidth="1.600" />
  </Svg>
);

/* ---------- data ---------- */

const menus = ['File', 'Edit', 'View', 'History', 'Bookmarks', 'Profiles', 'Tab', 'Window', 'Help'];

const booking = <Tile $bg="#04347c" $radius={5} $size={21}>B<Dot>.</Dot></Tile>;
const tabs: { title: string; icon: ReactNode }[] = [
  { title: 'CV Exam', icon: <DocsIcon /> },
  { title: 'Cobbah', icon: <DocsIcon /> },
  { title: 'Hollyoa', icon: <Tile $bg="#fff" $fg="#111" $size={27} $font={'"Noto Sans", sans-serif'}>d</Tile> },
  { title: 'Booking', icon: booking },
  { title: 'Samesu', icon: booking },
  { title: 'Round t', icon: <PlaneIcon /> },
  { title: 'Finish p', icon: <AirlineIcon /> },
  { title: 'Toronto', icon: <PlaneIcon /> },
  { title: 'London', icon: <PlaneIcon /> },
];

const bookmarks: { title: string; icon: ReactNode }[] = [
  { title: '10 Mobile Lightro...', icon: <Tile $bg="#f4661f" $size={33} $font={'"Liberation Serif", serif'}>E</Tile> },
  { title: '10 Mobile Lightro...', icon: <GlobeIcon /> },
  { title: '10 SEO auditing to...', icon: <FlowerIcon /> },
  { title: '10 Ways to Optimi...', icon: <MascotIcon /> },
  { title: '10 Ways to Skyroc...', icon: <FaceIcon /> },
  { title: '101 Tasks You Can...', icon: <GlobeIcon /> },
  { title: '11 Best Practices f...', icon: <Tile $bg="#ff7a59"><FaHubspot size={25} /></Tile> },
  { title: '11 Instagram Tips...', icon: <Tile $bg="#fdca2e" $fg="#111" $size={35} $font={'"Liberation Serif", serif'}><em>l</em></Tile> },
];

const extensions: ReactNode[] = [
  <FaVimeoV size={35} color="#1ab0ec" />,
  <Sunburst size={32} color="#6366f5" />,
  <GrammarlyIcon />,
  <WBadge />,
  <CameraIcon />,
  <GearIcon />,
  <PuzzleIcon />,
  <PanelIcon />,
];

const dockApps: { icon: ReactNode; running?: string }[] = [
  { icon: <Finder />, running: '#000c80' },
  { icon: <SiriOrb size={54} /> },
  { icon: <Rocket /> },
  { icon: <CalendarIcon /> },
  { icon: <AppTile $bg="#fff"><ChromeLogo size={43} /></AppTile>, running: '#1c0080' },
  { icon: <Notes /> },
  { icon: <SpotifyDisc size={55} color="#2fd566" />, running: '#4a0080' },
  { icon: <ZoomCam /> },
  { icon: <AppTile $bg="#1b1b1b"><FigmaMark /></AppTile>, running: '#640080' },
  { icon: <AppTile $bg="#fff"><SlackMark /></AppTile>, running: '#6c0080' },
  { icon: <Squares /> },
  { icon: <WebStorm /> },
  { icon: <AppTile $bg="#474747"><SublimeMark /></AppTile> },
  { icon: <NotionIcon />, running: '#780072' },
  { icon: <AppTile $bg="linear-gradient(160deg, #22bfc8 20%, #2f8be0 55%, #6a3af0)"><CanvaWord>Canva</CanvaWord></AppTile>, running: '#78005e' },
  { icon: <DriveIcon /> },
  { icon: <AppTile $bg="conic-gradient(from 40deg, #ff6a1e, #ff9a2e 12%, #d8d92e 22%, #7ed957 32%, #4aa0e8 50%, #7a5cf0 62%, #e428d0 76%, #f8182c 90%, #ff6a1e)"><CreativeCloudMark /></AppTile> },
  { icon: <AppTile $bg="#fff" $w={55} $h={55} $r={28}><Sunburst size={45} color="#625df5" width={3.4} inner={6} /></AppTile> },
  { icon: <AppTile $bg="#04232c" $w={57} $h={58} $r={13}><ScreenMark /></AppTile> },
  { icon: <AppTile $bg="#0a0a23" $w={62} $h={62} $r={31}><FaFreeCodeCamp size={36} color="#fff" /></AppTile> },
  { icon: <AppTile $bg="#ffd02f" $w={54} $h={54} $r={3}><MiroMark /></AppTile> },
  { icon: <Svg w={54} vb="0 0 54 54"><path d="M0 0h54v54H0z" fill="#ff3366" /><path d="M35 35h12v11H35z" fill="#fff" /></Svg> },
  { icon: <AppTile $bg="#fafafa"><TealBlob /></AppTile> },
  { icon: <AppTile $bg="linear-gradient(#9038a8, #6a3494)"><FaGithub size={43} color="#eeeef4" /></AppTile>, running: '#701400' },
  { icon: <AppTile $bg="#fff"><VsCodeMark /></AppTile> },
  { icon: <ZoomCam /> },
];
const dockExtras: { icon: ReactNode; running?: string }[] = [
  { icon: <TerminalIcon /> },
  { icon: <FlameIcon />, running: '#2a0080' },
  { icon: <AppTile $bg="#fafafa"><ClickUpMark /></AppTile>, running: '#1c0080' },
];
const thumbnails = [
  '#ececee', '#ececee', '#ececee',
  'linear-gradient(#e2e2ea 4px, #fff 4px)',
  'linear-gradient(#22e07a, #22e07a) 4px 31px / 15px 3px no-repeat, linear-gradient(#f4f4f4, #f4f4f4) 2px 9px / 18px 25px no-repeat, linear-gradient(#2bc48a, #2bc48a) 25px 18px / 14px 2px no-repeat, linear-gradient(#e6e6ee 5px, #3c3a44 5px, #6a5550 14px, #04202a 14px)',
  'linear-gradient(#c9cbe0, #c9cbe0) 2px 11px / 17px 1px no-repeat, linear-gradient(#e6e6ee, #e6e6ee) 0 0 / 58px 7px no-repeat, linear-gradient(90deg, #f4f4fa 23px, #2c2a48 23px)',
];

const DockEntry = ({ icon, running }: { icon: ReactNode; running?: string }) => (
  <DockItem>
    <DockIcon>{icon}</DockIcon>
    {running && <Running $tone={running} />}
  </DockItem>
);

export default function App() {
  return (
    <Desktop>
      <GlobalStyle />
      <IconLabel $x={2520} $y={238}>5</IconLabel>
      <IconLabel $x={2527} $y={685}>2</IconLabel>
      <IconLabel $x={2526} $y={909}>6</IconLabel>
      <IconLabel $x={2520} $y={1133}>9</IconLabel>
      <IconLabel $x={2527} $y={1357}>4</IconLabel>

      <MenuBar>
        <MenuList>
          <AppleSlot><FaApple size={33} /></AppleSlot>
          <MenuItem $bold>Chrome</MenuItem>
          {menus.map((m) => <MenuItem key={m} $warm>{m}</MenuItem>)}
        </MenuList>
        <StatusList>
          <StatusItem $w={33}><Sunburst size={33} color="#0c0f4a" width={3.2} /></StatusItem>
          <StatusItem $w={40} $gap={10}><CloudRecordIcon /></StatusItem>
          <StatusItem $w={28} $gap={22}><CubeIcon /></StatusItem>
          <StatusItem $w={30} $gap={31}><KIcon /></StatusItem>
          <StatusItem $w={18} $gap={35}><FaBluetoothB size={34} color="#b795d6" /></StatusItem>
          <StatusItem $w={42} $gap={30}><WifiIcon /></StatusItem>
          <StatusItem $w={52} $gap={22} $size={23}>99%</StatusItem>
          <StatusItem $w={48} $gap={8}><BatteryIcon /></StatusItem>
          <StatusItem $w={131} $gap={31}>Tue 00:53</StatusItem>
          <StatusItem $w={29} $gap={41}><MagnifierIcon /></StatusItem>
          <StatusItem $w={33} $gap={33}><SiriOrb size={33} /></StatusItem>
          <StatusItem $w={37} $gap={24}><ListIcon /></StatusItem>
        </StatusList>
      </MenuBar>

      <Window>
        <TabStrip>
          <TrafficLights>
            <Light $fill="#ff5f57" $ring="#e0443e" />
            <Light $fill="#febc3e" $ring="#dfa02f" />
            <Light $fill="#32cb47" $ring="#1fae33" />
          </TrafficLights>
          {tabs.map((t, i) => (
            <Tab key={t.title}>
              {t.icon}
              <TabTitle>{t.title}</TabTitle>
              <TabClose><CloseX /></TabClose>
              {i < tabs.length - 1 && <TabDivider />}
            </Tab>
          ))}
          <Tab $active>
            <SealIcon />
            <TabTitle>Official</TabTitle>
            <TabClose><CloseX /></TabClose>
          </Tab>
          <TabActions>
            <Svg w={26} vb="0 0 26 26"><path d="M13 1v24M1 13h24" stroke="#3c4043" strokeWidth="3" /></Svg>
            <Svg w={20} h={12} vb="0 0 20 12"><path d="M2 2l8 8 8-8" stroke="#3c4043" strokeWidth="2.800" /></Svg>
          </TabActions>
        </TabStrip>

        <Toolbar>
          <ToolSlot><ArrowIcon color="#5f6368" /></ToolSlot>
          <ToolSlot><ArrowIcon color="#babcbe" flip /></ToolSlot>
          <ToolSlot><ReloadIcon /></ToolSlot>
          <Omnibox>
            <LockIcon />
            <Url>esta.cbp.dhs.gov<UrlPath>/estaStatus</UrlPath></Url>
            <ToolSlot><ShareIcon /></ToolSlot>
            <ToolSlot><StarIcon /></ToolSlot>
          </Omnibox>
          {extensions.map((icon, i) => <ToolSlot key={i}>{icon}</ToolSlot>)}
          <ToolSlot><AvatarIcon /></ToolSlot>
          <UpdateButton>
            Update
            <Svg w={6} h={28} vb="0 0 6 28"><circle cx="3" cy="4" r="2.900" fill="#c5221f" /><circle cx="3" cy="14" r="2.900" fill="#c5221f" /><circle cx="3" cy="24" r="2.900" fill="#c5221f" /></Svg>
          </UpdateButton>
        </Toolbar>

        <BookmarksBar>
          {bookmarks.map((b, i) => (
            <Bookmark key={i}>{b.icon}<span>{b.title}</span></Bookmark>
          ))}
          <More>»</More>
        </BookmarksBar>

        <Viewport>
          <Page>
            <SiteNav />
            <Content>
              <TitleRow>
                <Title>AUTHORIZATION PENDING</Title>
                <PageActions>
                  <Action $gap={9}>Download<DownloadGlyph /></Action>
                  <Action $gap={8}>Print<Printer w={30} h={28} color="#1d3765" /></Action>
                </PageActions>
              </TitleRow>
              <p>
                Your travel authorization is under review because an immediate determination could not be made. This response does not indicate negative findings. A determination will be available within 72 hours.
                <br />
                Return to this website to retrieve and view the ESTA status of a previously submitted authorization for one or for a group of two or more persons.
              </p>
              <SubTitle>YOUR PAYMENT HAS BEEN SUBMITTED</SubTitle>
              <p>
                You have successfully submitted payment for the application listed below. A request by the cardholder to the bank or PayPal for a refund of fees will result in an automatic denial of the application.
                <br />
                Please print this page for your personal records.
              </p>
              <Table>
                <Row $head>
                  <Cell>Name</Cell>
                  <Cell>Date of Birth</Cell>
                  <Cell>Application Number</Cell>
                  <Cell>Passport Number</Cell>
                  <Cell>Status</Cell>
                  <Cell>Expires</Cell>
                </Row>
                <Row>
                  <Cell $strong>MARGARET-ALICE AMMA AKOM ACHIAMPONG</Cell>
                  <Cell>Oct 23, 1993</Cell>
                  <Cell>93082H7H79524621</Cell>
                  <Cell>523731843</Cell>
                  <Cell $strong>Authorization Pending</Cell>
                  <Cell>N/A</Cell>
                  <ViewLink><SearchGlyph />View</ViewLink>
                </Row>
              </Table>
              <Summary>
                <SummaryTitle>PAYMENT SUMMARY</SummaryTitle>
                <SummaryList>
                  <SummaryLine $strong><span>Payment Received:</span><span>----</span></SummaryLine>
                  <SummaryLine><span>Payment Date:</span><span>----</span></SummaryLine>
                  <SummaryLine><span>Payment Tracking Code:</span><span>----</span></SummaryLine>
                </SummaryList>
              </Summary>
              <Rule />
              <Notice>
                <Printer w={97} h={90} color="#000" />
                <NoticeBody>
                  <NoticeTitle>DHS recommends you print this screen for your records.</NoticeTitle>
                  <p>
                    You will not receive a separate notification about whether or not your application was approved. To retrieve an application and find the disposition, select “Check ESTA Status”
                    <br />
                    from the global navigation menu or home page. For additional guidance, select “How do I retrieve my application?” from the Help section of this website.
                  </p>
                </NoticeBody>
              </Notice>
            </Content>
          </Page>
          <Scrollbar><Thumb /></Scrollbar>
          <Captcha>
            <CaptchaLogo />
            <CaptchaLinks>Privacy - Terms</CaptchaLinks>
          </Captcha>
        </Viewport>
      </Window>

      <Dock>
        <DockGroup>{dockApps.map((a, i) => <DockEntry key={i} {...a} />)}</DockGroup>
        <DockDivider $tone="#8a5a86" $h={40} $before={15} $after={15} />
        <DockGroup>{dockExtras.map((a, i) => <DockEntry key={i} {...a} />)}</DockGroup>
        <DockDivider $tone="#4a42b8" $h={60} $before={15} $after={12} />
        <DockGroup>
          {thumbnails.map((bg, i) => (
            <DockItem key={i}>
              <DockIcon>
                <Thumbnail $bg={bg} />
                <ThumbBadge><ChromeLogo size={17} /></ThumbBadge>
              </DockIcon>
            </DockItem>
          ))}
          <DockEntry icon={<TrashIcon />} />
        </DockGroup>
      </Dock>
    </Desktop>
  );
}
